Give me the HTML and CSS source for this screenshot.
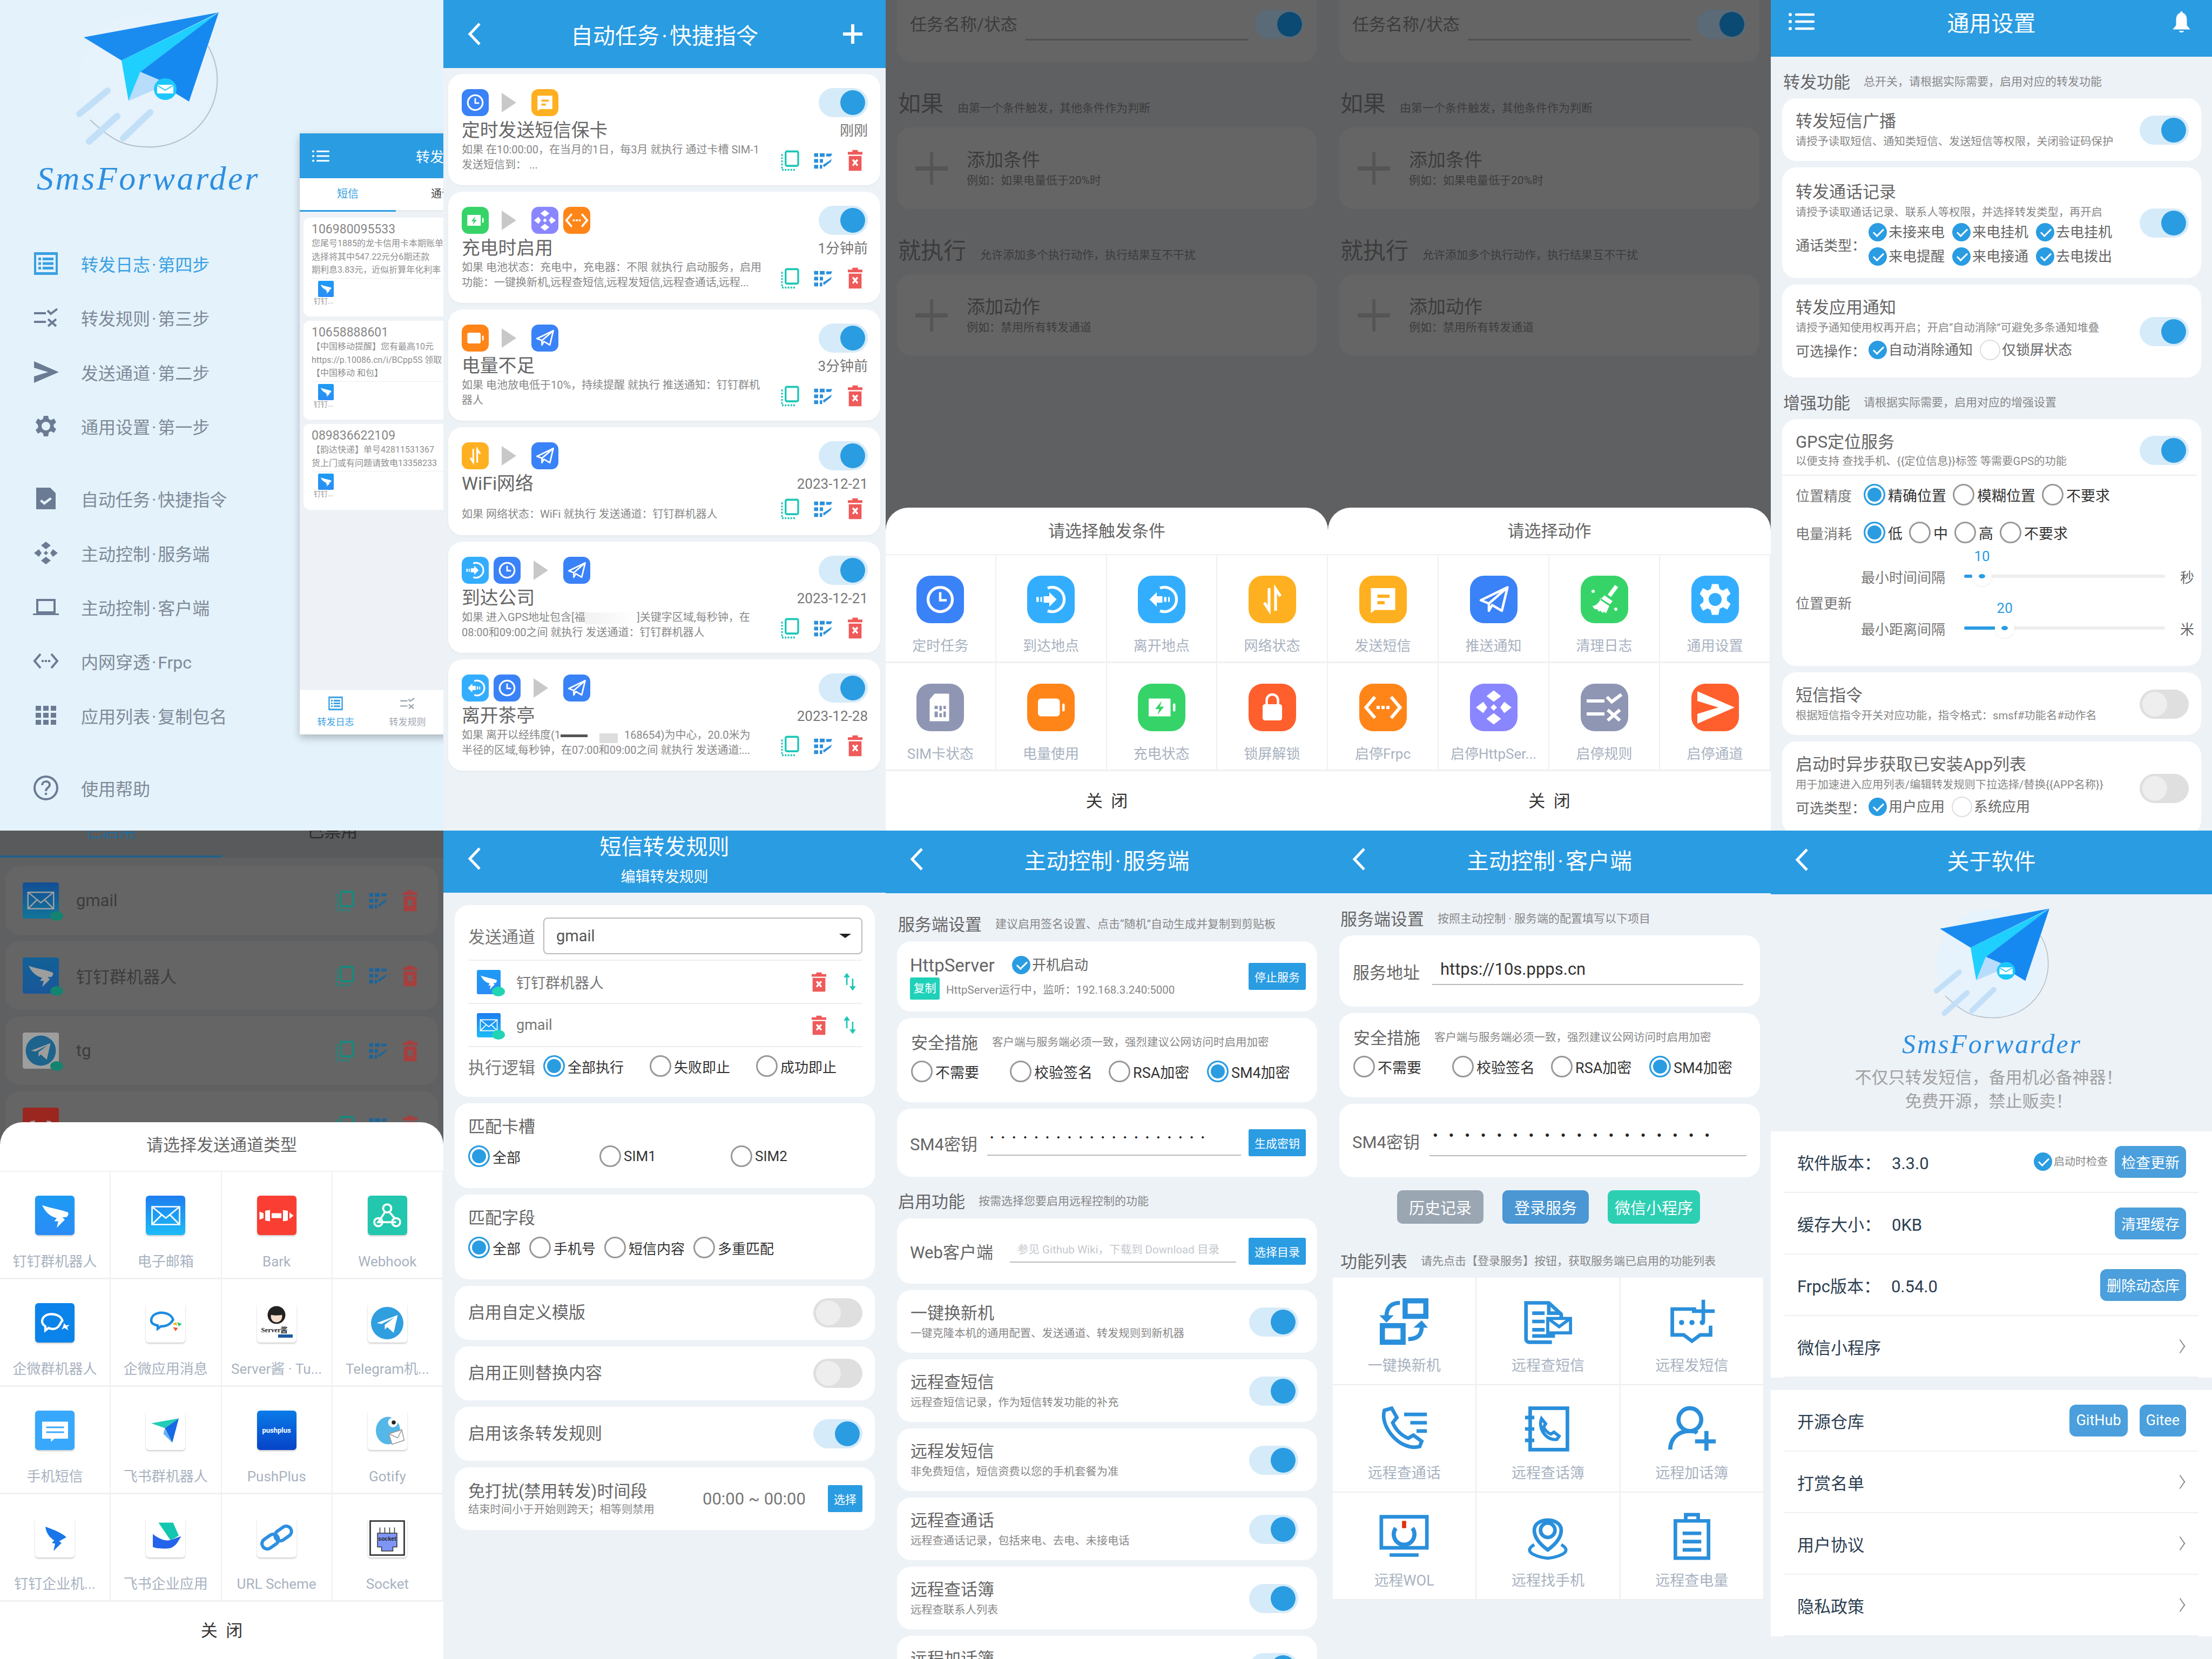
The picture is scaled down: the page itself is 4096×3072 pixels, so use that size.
FILE: index.html
```html
<!DOCTYPE html>
<html lang="zh-CN">

<head>
    <meta charset="UTF-8">
    <title>SmsForwarder</title>
    <link rel="stylesheet" href="styles.css">
</head>

<body>
    <!-- icon sprite -->
    <svg class="sprite" aria-hidden="true">
        <defs>
            <symbol id="list" viewBox="0 0 48 48"><path fill-rule="evenodd" d="M2 3h44v42H2zM6 8v32h36V8z"/><path d="M10 13h5v5h-5zM18 13h20v5H18zM10 21.500h5v5h-5zM18 21.500h20v5H18zM10 30h5v5h-5zM18 30h20v5H18z"/></symbol>
            <symbol id="rules" viewBox="0 0 48 48"><path d="M2 14h22v4H2zM2 30h22v4H2z"/><path fill="none" stroke="currentColor" stroke-width="4" d="M27 11l6 6 12-9M28 27l15 13M43 27 28 40"/></symbol>
            <symbol id="send" viewBox="0 0 48 48"><path d="M2 4l46 20L2 44V32l26-8L2 16z"/></symbol>
            <symbol id="gear" viewBox="0 0 48 48"><path fill-rule="evenodd" d="M20 5h8l1.500 6 4 2 5.500-3 4 7-4.500 4v4.500l4.500 4-4 7-5.500-3-4 2L28 43h-8l-1.500-6-4-2-5.500 3-4-7 4.500-4V22.500L5 17l4-7 5.500 3 4-2zM24 16a8 8 0 1 0 0 16 8 8 0 0 0 0-16z"/></symbol>
            <symbol id="task" viewBox="0 0 48 48"><path fill-rule="evenodd" d="M6 4h26l10 10v30H6zM13 29l3-3 5 4 11-8 3 3-14 11z"/></symbol>
            <symbol id="server" viewBox="0 0 48 48"><path d="M24 3l9 7-9 7-9-7zM24 31l9 7-9 7-9-7zM2 24l9-7 5 7-5 7zM46 24l-9-7-5 7 5 7zM24 20l4 4-4 4-4-4z"/></symbol>
            <symbol id="laptop" viewBox="0 0 48 48"><path fill-rule="evenodd" d="M6 9h36v27H6zM10 13v19h28V13z"/><path d="M0 36h48v3H0z"/></symbol>
            <symbol id="frp" viewBox="0 0 48 48"><path fill="none" stroke="currentColor" stroke-width="4" d="M14 11 3 24l11 13M34 11l11 13-11 13"/><path d="M16 22h4v4h-4zM22 22h4v4h-4zM28 22h4v4h-4z"/></symbol>
            <symbol id="apps" viewBox="0 0 48 48"><path d="M5 6h10v9H5zM19 6h10v9H19zM33 6h10v9H33zM5 19h10v9H5zM19 19h10v9H19zM33 19h10v9H33zM5 32h10v9H5zM19 32h10v9H19zM33 32h10v9H33z"/></symbol>
            <symbol id="help" viewBox="0 0 48 48"><circle cx="24" cy="24" r="21" fill="none" stroke="currentColor" stroke-width="4"/><path fill="none" stroke="currentColor" stroke-width="4" d="M17 19c0-9 14-9 14-1 0 6-7 5-7 12"/><path d="M22 33h4v4h-4z"/></symbol>
            <symbol id="clock" viewBox="0 0 48 48"><circle cx="24" cy="24" r="15" fill="none" stroke="currentColor" stroke-width="3.500"/><path fill="none" stroke="currentColor" stroke-width="3" d="M24 15v10h8"/></symbol>
            <symbol id="arrive" viewBox="0 0 48 48"><path fill="none" stroke="currentColor" stroke-width="3.500" d="M20 10a15 15 0 1 1 0 28"/><path d="M6 21h3v6H6zM11 21h2v6h-2zM15 20h7v-5l9 9-9 9v-5h-7z"/></symbol>
            <symbol id="leave" viewBox="0 0 48 48"><path fill="none" stroke="currentColor" stroke-width="3.500" d="M22 10a15 15 0 1 1 0 28"/><path d="M9 24l9-9v5h7v8h-7v5zM27 21h3v6h-3zM32 21h2v6h-2z"/></symbol>
            <symbol id="net" viewBox="0 0 48 48"><path fill="none" stroke="currentColor" stroke-width="3.500" d="M20 10v27l-6-9M28 38V11l6 9"/></symbol>
            <symbol id="msg" viewBox="0 0 48 48"><path fill-rule="evenodd" d="M9 10h30v27H14l-5 4zM17 18v4h15v-4zM17 26v4h9v-4z"/></symbol>
            <symbol id="plane" viewBox="0 0 48 48"><path fill="none" stroke="currentColor" stroke-width="3" stroke-linejoin="round" d="M8 25 41 9l-7 29-12-7-4 7v-9zM18 29 41 9"/></symbol>
            <symbol id="broom" viewBox="0 0 48 48"><path d="M37 6l4 3-9 12-4-3zM24 19l10 7-3 4-11-7zM18 24l12 8-4 9-3-2-1 2-3-3-2 1-2-3-3 0-3-4c4 0 8-3 11-10z"/><circle cx="10" cy="14" r="2"/><circle cx="38" cy="36" r="2"/></symbol>
            <symbol id="sim" viewBox="0 0 48 48"><path fill-rule="evenodd" d="M17 7h18v34H11V14zM17 22v4h4v-4zM23 22v6h3v-6zM28 22v4h3v-4zM17 29v7h4v-7zM23 31v5h3v-5zM28 29v7h3v-7z"/></symbol>
            <symbol id="batt" viewBox="0 0 48 48"><rect x="8" y="13" width="27" height="22" rx="4"/><rect x="38" y="19" width="3" height="10" rx="1.500"/></symbol>
            <symbol id="charge" viewBox="0 0 48 48"><path fill-rule="evenodd" d="M8 13h27v22H8zM24 16l-8 10h5l-2 7 8-10h-5z"/><rect x="38" y="19" width="3" height="10" rx="1.500"/></symbol>
            <symbol id="lock" viewBox="0 0 48 48"><path fill="none" stroke="currentColor" stroke-width="3" d="M17 21v-6a7 7 0 0 1 14 0v6"/><rect x="12" y="20" width="24" height="20" rx="3"/></symbol>
            <symbol id="copy" viewBox="0 0 48 48" preserveAspectRatio="none"><rect x="13" y="4" width="31" height="32" rx="3" fill="none" stroke="currentColor" stroke-width="4.500"/><path fill="none" stroke="currentColor" stroke-width="4" stroke-dasharray="4 3" d="M4 10v35h34"/></symbol>
            <symbol id="edit" viewBox="0 0 48 48" preserveAspectRatio="none"><path d="M2 6h10v9H2zM16 6h12v9H16zM2 20h10v9H2zM16 20h8v9h-8zM2 34h10v9H2zM16 34h6v9h-6zM32 7h15l-4 7H32zM24 34l22-14-3 7-17 13z"/></symbol>
            <symbol id="trash" viewBox="0 0 48 48" preserveAspectRatio="none"><path d="M15 1h18v4h15v6H0V5h15z"/><path fill-rule="evenodd" d="M3 14h42v33H3zM14 24l4-3 6 4 6-4 4 3-6 5 6 5-4 3-6-5-6 5-4-3 6-5z"/></symbol>
            <symbol id="swap" viewBox="0 0 48 48" preserveAspectRatio="none"><path fill="none" stroke="currentColor" stroke-width="5" d="M13 32V8M33 16v28"/><path d="M13 2l11 11H2zM33 46l11-11H22z"/></symbol>
            <symbol id="back" viewBox="0 0 24 44"><path fill="none" stroke="currentColor" stroke-width="5" d="M22 3 4 22l18 19"/></symbol>
            <symbol id="menu" viewBox="0 0 48 36"><path fill="none" stroke="currentColor" stroke-width="4.500" stroke-linecap="round" d="M14 5h32M14 18h32M14 31h32"/><circle cx="3" cy="5" r="3"/><circle cx="3" cy="18" r="3"/><circle cx="3" cy="31" r="3"/></symbol>
            <symbol id="bell" viewBox="0 0 48 48" preserveAspectRatio="none"><path d="M24 3c2 0 3 1 3 3 8 2 10 8 10 15v9l8 8H3l8-8v-9c0-7 2-13 10-15 0-2 1-3 3-3zM18 41h12c-1 4-11 4-12 0z"/></symbol>

            <symbol id="ding" viewBox="0 0 48 48"><path d="M8 11c10 4 22 5 32 9 1 2 0 4-2 6h-5l3 3-10 10 2-8h-5l3-4C18 25 12 20 8 11z"/></symbol>
            <symbol id="mail" viewBox="0 0 48 48"><path fill="none" stroke="currentColor" stroke-width="1.800" d="M7 13h34v22H7zM7 13l17 14 17-14M7 35l12-12M41 35 29 23"/></symbol>
            <symbol id="bark" viewBox="0 0 48 48"><path d="M3 19l5 2v6l-5 2zM10 18l6-1v14l-6-1zM18 21h12v6H18zM32 17l6 1v12l-6 1zM40 20l5 4-5 4z"/></symbol>
            <symbol id="hook" viewBox="0 0 48 48"><g fill="none" stroke="currentColor" stroke-width="2.500"><circle cx="24" cy="15" r="5"/><circle cx="13" cy="32" r="5"/><circle cx="35" cy="32" r="5"/><path d="M21 20l-8 12h22M27 20l7 8"/></g></symbol>
            <symbol id="wework" viewBox="0 0 48 48"><path fill="none" stroke="currentColor" stroke-width="2.800" d="M8 22c0-12 22-12 25-1-2 1-2 4-4 6-3 5-9 5-13 3l-4 3v-5c-3-2-4-4-4-6z"/><path d="M35 24l3 3 4-1-3 3 1 4-4-3-4 2 2-4z"/></symbol>
            <symbol id="tg" viewBox="0 0 48 48"><circle cx="24" cy="24" r="20" fill="#2f9fe0"/><path fill="#fff" d="M11 24l26-10-5 22-8-7-3 3v-6l12-9-16 8z"/></symbol>
            <symbol id="sms" viewBox="0 0 48 48"><path fill-rule="evenodd" d="M8 13h32v21H23l-4 4v-4H8zM13 19v2h22v-2zM13 25v2h22v-2z"/></symbol>
            <symbol id="wechat" viewBox="0 0 48 48"><path fill="none" stroke="#1d8ce0" stroke-width="3" d="M6 21c0-13 24-13 27-1-3 5-7 8-15 8l-4 3v-4c-5-1-8-3-8-6z"/><path fill="#f7b500" d="M32 25l5-2 1 4z"/><path fill="#28c47a" d="M38 23l6 2-4 3z"/><path fill="#f0562c" d="M33 29l6 1-3 4z"/></symbol>
            <symbol id="feishu" viewBox="0 0 48 48"><path fill="#22cdb4" d="M6 15l34-6-17 12z"/><path fill="#1769e6" d="M40 9l-8 30-9-18z"/><path fill="#66b1f5" d="M23 21l9 18-11-11z"/></symbol>
            <symbol id="gotify" viewBox="0 0 48 48"><ellipse cx="25" cy="24" rx="15" ry="17" fill="#55b6e8"/><circle cx="31" cy="14" r="6" fill="#fff"/><circle cx="32" cy="14" r="2.500" fill="#222"/><path fill="#fff" stroke="#999" d="M26 28l16-5 3 13-15 5z"/><path fill="none" stroke="#999" d="M26 28l11 5 5-10"/></symbol>
            <symbol id="dingent" viewBox="0 0 48 48"><path fill="#1a76e8" d="M12 10c8 3 18 6 26 13l-9 5 3 2-10 10 2-9-4-1 3-3c-6-4-10-9-11-17z"/></symbol>
            <symbol id="fsapp" viewBox="0 0 48 48"><path fill="#13c6b0" d="M15 5h18l7 16-10 6z"/><path fill="#2563eb" d="M8 19c6 5 13 8 18 8 6 0 11-4 17-5-4 6-7 15-18 15-6 0-13 0-17-2z"/></symbol>
            <symbol id="link" viewBox="0 0 48 48"><g fill="none" stroke="#2f8fe0" stroke-width="4"><rect x="5" y="22" width="22" height="13" rx="6.500" transform="rotate(-35 16 28)"/><rect x="21" y="12" width="22" height="13" rx="6.500" transform="rotate(-35 32 18)"/></g></symbol>

            <symbol id="r-new" viewBox="0 0 48 48"><g fill="none" stroke="currentColor" stroke-width="5"><path d="M25 4h20v15H25zM3 28h20v16H3z"/></g><path fill="none" stroke="currentColor" stroke-width="4" d="M20 6C12 6 7 10 7 19M28 41c8 0 13-3 13-12"/><path d="M0 18h14l-7 7zM33 30h14l-6-7z"/></symbol>
            <symbol id="r-doc" viewBox="0 0 48 48"><path fill="none" stroke="currentColor" stroke-width="3.500" d="M28 44H6a3 3 0 0 1-3-3V6h22l12 11v3M25 5v11h11M9 16h12M9 24h12M9 32h12M9 38h22"/><path fill="none" stroke="currentColor" stroke-width="3" d="M24 21h22v14H24zM24 21l11 8 11-8"/></symbol>
            <symbol id="r-add" viewBox="0 0 48 48"><path fill="none" stroke="currentColor" stroke-width="3.500" d="M28 12H5v25h11l8 6 8-6h10V28M35 3v22M24 14h22"/><circle cx="14" cy="25" r="2.500"/><circle cx="24" cy="25" r="2.500"/><circle cx="34" cy="25" r="2.500"/></symbol>
            <symbol id="r-call" viewBox="0 0 48 48"><path fill="none" stroke="currentColor" stroke-width="3.500" d="M12 4l5 9-4 5c3 7 8 12 15 15l5-3 8 6-2 5c-19 5-39-20-34-35zM24 10h22M30 18h16M36 26h10"/></symbol>
            <symbol id="r-book" viewBox="0 0 48 48"><path fill="none" stroke="currentColor" stroke-width="3.500" d="M7 4h36v40H7zM2 13h9M2 24h9M2 35h9"/><path fill="none" stroke="currentColor" stroke-width="3" d="M18 14l4 5-2 3c1 3 4 6 7 7l3-2 5 4-2 3c-9 2-19-9-15-20z"/></symbol>
            <symbol id="r-person" viewBox="0 0 48 48"><circle cx="22" cy="15" r="11" fill="none" stroke="currentColor" stroke-width="4"/><path fill="none" stroke="currentColor" stroke-width="4" d="M3 44c0-10 7-18 19-18 3 0 5 0 7 2M38 26v19M27 36h20"/></symbol>
            <symbol id="r-wol" viewBox="0 0 48 48"><path fill="none" stroke="currentColor" stroke-width="3.500" d="M2 5h44v30H2zM10 42h28"/><path fill="none" stroke="currentColor" stroke-width="4" d="M16 16a10 10 0 1 0 16 0"/><rect x="22" y="9" width="4" height="7" fill="#e03010"/></symbol>
            <symbol id="r-loc" viewBox="0 0 48 48"><path fill="none" stroke="currentColor" stroke-width="3.500" d="M24 37c-7-5-13-11-13-19C11 5 37 5 37 18c0 8-6 14-13 19z"/><circle cx="24" cy="18" r="7" fill="none" stroke="currentColor" stroke-width="3.500"/><path fill="none" stroke="currentColor" stroke-width="3" d="M11 32c-14 8 8 13 13 13s27-5 13-13"/></symbol>
            <symbol id="r-clip" viewBox="0 0 48 48"><path fill="none" stroke="currentColor" stroke-width="3.500" d="M8 9h32v36H8zM18 3h12v6H18zM15 21h18M15 29h18M15 37h18"/></symbol>

            <symbol id="logo" viewBox="140 15 270 265">
                <circle cx="272" cy="148" r="124" fill="#e6f2fc"/>
                <path fill="none" stroke="#b4c0ca" stroke-width="2" d="M385 85a124 124 0 0 1-113 187c-40 0-65-12-105-50"/>
                <path fill="none" stroke="#c2dff8" stroke-width="12" stroke-linecap="round" d="M147 211 199 168M165 262l52-47M228 256l50-48"/>
                <path fill="#1a8cf0" d="M155 69 405 23 225 112z"/>
                <path fill="#1fd0ff" d="M225 112 405 24 260 133 238 187z"/>
                <path fill="#1589f0" d="M260 133 405 23 350 188z"/>
                <path fill="#b8dcfb" d="M238 187 260 133 312 155z"/>
                <ellipse cx="306" cy="165" rx="21" ry="20" fill="#1cc8fb"/>
                <path fill="#fff" d="M291 157h30v16h-30z"/>
                <path fill="none" stroke="#1cc8fb" stroke-width="2" d="M291 158l15 9 15-9"/>
            </symbol>
        </defs>
    </svg>

    <!-- 1: drawer -->
    <section class="panel drawer">
        <svg class="logo"><use href="#logo"/></svg>
        <div class="brand">SmsForwarder</div>
        <nav class="nav">
            <a class="nav-i active"><svg><use href="#list"/></svg>转发日志 · 第四步</a>
            <a class="nav-i"><svg><use href="#rules"/></svg>转发规则 · 第三步</a>
            <a class="nav-i"><svg><use href="#send"/></svg>发送通道 · 第二步</a>
            <a class="nav-i"><svg><use href="#gear"/></svg>通用设置 · 第一步</a>
            <a class="nav-i gap"><svg><use href="#task"/></svg>自动任务 · 快捷指令</a>
            <a class="nav-i"><svg><use href="#server"/></svg>主动控制 · 服务端</a>
            <a class="nav-i"><svg><use href="#laptop"/></svg>主动控制 · 客户端</a>
            <a class="nav-i"><svg><use href="#frp"/></svg>内网穿透 · Frpc</a>
            <a class="nav-i"><svg><use href="#apps"/></svg>应用列表 · 复制包名</a>
            <a class="nav-i gap"><svg><use href="#help"/></svg>使用帮助</a>
        </nav>
        <div class="phone">
            <div class="phone-bar"><svg class="phone-menu"><use href="#menu"/></svg><span>转发日志</span></div>
            <div class="phone-tabs"><b>短信</b><span>通话</span></div>
            <div class="phone-list">
                <div class="log h183">
                    <div class="log-no">106980095533</div>
                    <p>您尾号1885的龙卡信用卡本期账单<br>选择将其中547.22元分6期还款<br>期利息3.83元，近似折算年化利率</p>
                    <div class="log-foot"><span class="mini t-ding"><svg><use href="#ding"/></svg></span><i>钉钉...</i></div>
                </div>
                <div class="log h183">
                    <div class="log-no">10658888601</div>
                    <p>【中国移动提醒】您有最高10元<br>https://p.10086.cn/i/BCpp5S 领取<br>【中国移动 和包】</p>
                    <div class="log-foot"><span class="mini t-ding"><svg><use href="#ding"/></svg></span><i>钉钉...</i></div>
                </div>
                <div class="log h159">
                    <div class="log-no">089836622109</div>
                    <p>【韵达快递】单号42811531367<br>货上门或有问题请致电13358233</p>
                    <div class="log-foot"><span class="mini t-ding"><svg><use href="#ding"/></svg></span><i>钉钉...</i></div>
                </div>
            </div>
            <div class="phone-nav">
                <div class="active"><svg><use href="#list"/></svg>转发日志</div>
                <div><svg><use href="#rules"/></svg>转发规则</div>
            </div>
        </div>
    </section>

    <!-- 2: tasks -->
    <section class="panel">
        <header class="bar bar-126"><svg class="bar-back"><use href="#back"/></svg>自动任务 · 快捷指令<svg class="bar-plus" viewBox="0 0 40 40"><path d="M20 2v36M2 20h36"/></svg></header>
        <div class="tasks">
            <article class="task">
                <div class="task-l">
                    <div class="tiles"><span class="tile t-blue"><svg><use href="#clock"/></svg></span><i class="play"></i><span class="tile t-yel"><svg><use href="#msg"/></svg></span></div>
                    <h3>定时发送短信保卡</h3>
                    <p>如果 在10:00:00，在当月的1日，每3月 就执行 通过卡槽 SIM-1<br>发送短信到： ...</p>
                </div>
                <div class="task-r"><span class="sw"></span><time>刚刚</time><div class="acts"><svg class="a-copy"><use href="#copy"/></svg><svg class="a-edit"><use href="#edit"/></svg><svg class="a-del"><use href="#trash"/></svg></div></div>
            </article>
            <article class="task">
                <div class="task-l">
                    <div class="tiles"><span class="tile t-green"><svg><use href="#charge"/></svg></span><i class="play"></i><span class="tile t-pur"><svg><use href="#server"/></svg></span><span class="tile t-org"><svg><use href="#frp"/></svg></span></div>
                    <h3>充电时启用</h3>
                    <p>如果 电池状态：充电中，充电器：不限 就执行 启动服务，启用<br>功能：一键换新机,远程查短信,远程发短信,远程查通话,远程...</p>
                </div>
                <div class="task-r"><span class="sw"></span><time>1分钟前</time><div class="acts"><svg class="a-copy"><use href="#copy"/></svg><svg class="a-edit"><use href="#edit"/></svg><svg class="a-del"><use href="#trash"/></svg></div></div>
            </article>
            <article class="task">
                <div class="task-l">
                    <div class="tiles"><span class="tile t-org"><svg><use href="#batt"/></svg></span><i class="play"></i><span class="tile t-blue"><svg><use href="#plane"/></svg></span></div>
                    <h3>电量不足</h3>
                    <p>如果 电池放电低于10%，持续提醒 就执行 推送通知：钉钉群机<br>器人</p>
                </div>
                <div class="task-r"><span class="sw"></span><time>3分钟前</time><div class="acts"><svg class="a-copy"><use href="#copy"/></svg><svg class="a-edit"><use href="#edit"/></svg><svg class="a-del"><use href="#trash"/></svg></div></div>
            </article>
            <article class="task task-low">
                <div class="task-l">
                    <div class="tiles"><span class="tile t-yel"><svg><use href="#net"/></svg></span><i class="play"></i><span class="tile t-blue"><svg><use href="#plane"/></svg></span></div>
                    <h3>WiFi网络</h3>
                    <p>如果 网络状态：WiFi 就执行 发送通道：钉钉群机器人</p>
                </div>
                <div class="task-r"><span class="sw"></span><time>2023-12-21</time><div class="acts"><svg class="a-copy"><use href="#copy"/></svg><svg class="a-edit"><use href="#edit"/></svg><svg class="a-del"><use href="#trash"/></svg></div></div>
            </article>
            <article class="task">
                <div class="task-l">
                    <div class="tiles"><span class="tile t-sky"><svg><use href="#arrive"/></svg></span><span class="tile t-blue"><svg><use href="#clock"/></svg></span><i class="play"></i><span class="tile t-blue"><svg><use href="#plane"/></svg></span></div>
                    <h3>到达公司</h3>
                    <p>如果 进入GPS地址包含[福<span class="blur"></span>]关键字区域,每秒钟，在<br>08:00和09:00之间 就执行 发送通道：钉钉群机器人</p>
                </div>
                <div class="task-r"><span class="sw"></span><time>2023-12-21</time><div class="acts"><svg class="a-copy"><use href="#copy"/></svg><svg class="a-edit"><use href="#edit"/></svg><svg class="a-del"><use href="#trash"/></svg></div></div>
            </article>
            <article class="task">
                <div class="task-l">
                    <div class="tiles"><span class="tile t-sky"><svg><use href="#leave"/></svg></span><span class="tile t-blue"><svg><use href="#clock"/></svg></span><i class="play"></i><span class="tile t-blue"><svg><use href="#plane"/></svg></span></div>
                    <h3>离开茶亭</h3>
                    <p>如果 离开以经纬度(1<span class="blur-dark"></span><span class="blur-gray"></span>168654)为中心，20.0米为<br>半径的区域,每秒钟，在07:00和09:00之间 就执行 发送通道:...</p>
                </div>
                <div class="task-r"><span class="sw"></span><time>2023-12-28</time><div class="acts"><svg class="a-copy"><use href="#copy"/></svg><svg class="a-edit"><use href="#edit"/></svg><svg class="a-del"><use href="#trash"/></svg></div></div>
            </article>
        </div>
    </section>

    <!-- 3: trigger picker -->
    <section class="panel dim">
        <div class="dim-top"><span class="dim-name">任务名称/状态</span><span class="dim-input"></span><span class="sw sw-dim"></span></div>
        <div class="dim-sec"><h2>如果</h2><span>由第一个条件触发，其他条件作为判断</span></div>
        <div class="dim-add"><svg class="dim-plus" viewBox="0 0 60 60"><path d="M27 0h6v60h-6z"/><path d="M0 26h60v8H0z"/></svg><div><h3>添加条件</h3><p>例如：如果电量低于20%时</p></div></div>
        <div class="dim-sec"><h2>就执行</h2><span>允许添加多个执行动作，执行结果互不干扰</span></div>
        <div class="dim-add"><svg class="dim-plus" viewBox="0 0 60 60"><path d="M27 0h6v60h-6z"/><path d="M0 26h60v8H0z"/></svg><div><h3>添加动作</h3><p>例如：禁用所有转发通道</p></div></div>
        <div class="sheet sheet-940">
            <div class="sheet-title">请选择触发条件</div>
            <div class="pick4">
                <div class="cell"><span class="tile big t-blue"><svg><use href="#clock"/></svg></span><label>定时任务</label></div>
                <div class="cell"><span class="tile big t-sky"><svg><use href="#arrive"/></svg></span><label>到达地点</label></div>
                <div class="cell"><span class="tile big t-sky"><svg><use href="#leave"/></svg></span><label>离开地点</label></div>
                <div class="cell"><span class="tile big t-yel"><svg><use href="#net"/></svg></span><label>网络状态</label></div>
                <div class="cell"><span class="tile big t-gray"><svg><use href="#sim"/></svg></span><label>SIM卡状态</label></div>
                <div class="cell"><span class="tile big t-org"><svg><use href="#batt"/></svg></span><label>电量使用</label></div>
                <div class="cell"><span class="tile big t-green"><svg><use href="#charge"/></svg></span><label>充电状态</label></div>
                <div class="cell"><span class="tile big t-red"><svg><use href="#lock"/></svg></span><label>锁屏解锁</label></div>
            </div>
            <div class="sheet-close">关 闭</div>
        </div>
    </section>

    <!-- 4: action picker -->
    <section class="panel dim">
        <div class="dim-top"><span class="dim-name">任务名称/状态</span><span class="dim-input"></span><span class="sw sw-dim"></span></div>
        <div class="dim-sec"><h2>如果</h2><span>由第一个条件触发，其他条件作为判断</span></div>
        <div class="dim-add"><svg class="dim-plus" viewBox="0 0 60 60"><path d="M27 0h6v60h-6z"/><path d="M0 26h60v8H0z"/></svg><div><h3>添加条件</h3><p>例如：如果电量低于20%时</p></div></div>
        <div class="dim-sec"><h2>就执行</h2><span>允许添加多个执行动作，执行结果互不干扰</span></div>
        <div class="dim-add"><svg class="dim-plus" viewBox="0 0 60 60"><path d="M27 0h6v60h-6z"/><path d="M0 26h60v8H0z"/></svg><div><h3>添加动作</h3><p>例如：禁用所有转发通道</p></div></div>
        <div class="sheet sheet-940">
            <div class="sheet-title">请选择动作</div>
            <div class="pick4">
                <div class="cell"><span class="tile big t-yel"><svg><use href="#msg"/></svg></span><label>发送短信</label></div>
                <div class="cell"><span class="tile big t-blue"><svg><use href="#plane"/></svg></span><label>推送通知</label></div>
                <div class="cell"><span class="tile big t-green"><svg><use href="#broom"/></svg></span><label>清理日志</label></div>
                <div class="cell"><span class="tile big t-sky"><svg><use href="#gear"/></svg></span><label>通用设置</label></div>
                <div class="cell"><span class="tile big t-org"><svg><use href="#frp"/></svg></span><label>启停Frpc</label></div>
                <div class="cell"><span class="tile big t-pur"><svg><use href="#server"/></svg></span><label>启停HttpSer...</label></div>
                <div class="cell"><span class="tile big t-gray"><svg><use href="#rules"/></svg></span><label>启停规则</label></div>
                <div class="cell"><span class="tile big t-red"><svg><use href="#send"/></svg></span><label>启停通道</label></div>
            </div>
            <div class="sheet-close">关 闭</div>
        </div>
    </section>

    <!-- 5: settings -->
    <section class="panel">
        <header class="bar bar-105"><svg class="bar-menu"><use href="#menu"/></svg>通用设置<svg class="bar-bell"><use href="#bell"/></svg></header>
        <div class="sec sec-first"><h2>转发功能</h2><span>总开关，请根据实际需要，启用对应的转发功能</span></div>
        <div class="card opt">
            <div><h3>转发短信广播</h3><p>请授予读取短信、通知类短信、发送短信等权限，关闭验证码保护</p></div>
            <span class="sw"></span>
        </div>
        <div class="card opt h205">
            <div>
                <h3>转发通话记录</h3><p>请授予读取通话记录、联系人等权限，并选择转发类型，再开启</p>
                <div class="calls"><b>通话类型：</b>
                    <div class="checks">
                        <span class="chk on">未接来电</span><span class="chk on">来电挂机</span><span class="chk on">去电挂机</span>
                        <span class="chk on">来电提醒</span><span class="chk on">来电接通</span><span class="chk on">去电拨出</span>
                    </div>
                </div>
            </div>
            <span class="sw"></span>
        </div>
        <div class="card opt h172">
            <div>
                <h3>转发应用通知</h3><p>请授予通知使用权再开启；开启“自动消除”可避免多条通知堆叠</p>
                <div class="line"><b>可选操作：</b><span class="chk on">自动消除通知</span><span class="chk">仅锁屏状态</span></div>
            </div>
            <span class="sw"></span>
        </div>
        <div class="sec"><h2>增强功能</h2><span>请根据实际需要，启用对应的增强设置</span></div>
        <div class="card gps">
            <div class="opt opt-rule">
                <div><h3>GPS定位服务</h3><p>以便支持 查找手机、{{定位信息}}标签 等需要GPS的功能</p></div>
                <span class="sw"></span>
            </div>
            <div class="gps-row"><b>位置精度</b><span class="radio on">精确位置</span><span class="radio">模糊位置</span><span class="radio">不要求</span></div>
            <div class="gps-row"><b>电量消耗</b><span class="radio on">低</span><span class="radio">中</span><span class="radio">高</span><span class="radio">不要求</span></div>
            <div class="loc">
                <b>位置更新</b>
                <div class="sliders">
                    <div class="sl"><span>最小时间间隔</span><div class="track"><div class="fill" style="width:4%"></div><div class="thumb" style="left:8.9%"><em>10</em></div></div><i>秒</i></div>
                    <div class="sl"><span>最小距离间隔</span><div class="track"><div class="fill" style="width:15.6%"></div><div class="thumb" style="left:20.2%"><em>20</em></div></div><i>米</i></div>
                </div>
            </div>
        </div>
        <div class="card opt">
            <div><h3>短信指令</h3><p>根据短信指令开关对应功能，指令格式：smsf#功能名#动作名</p></div>
            <span class="sw off"></span>
        </div>
        <div class="card opt h172">
            <div>
                <h3>启动时异步获取已安装App列表</h3><p>用于加速进入应用列表/编辑转发规则下拉选择/替换{{APP名称}}</p>
                <div class="line"><b>可选类型：</b><span class="chk on">用户应用</span><span class="chk">系统应用</span></div>
            </div>
            <span class="sw off"></span>
        </div>
    </section>

    <!-- 6: channel picker -->
    <section class="panel dim">
        <div class="dim-tabs"><span class="cur">已启用</span><span>已禁用</span></div>
        <div class="chan"><span class="thumb-ic t-mail"><svg><use href="#mail"/></svg><i></i></span>gmail<div class="acts"><svg class="a-copy"><use href="#copy"/></svg><svg class="a-edit"><use href="#edit"/></svg><svg class="a-del"><use href="#trash"/></svg></div></div>
        <div class="chan"><span class="thumb-ic t-ding"><svg><use href="#ding"/></svg><i></i></span>钉钉群机器人<div class="acts"><svg class="a-copy"><use href="#copy"/></svg><svg class="a-edit"><use href="#edit"/></svg><svg class="a-del"><use href="#trash"/></svg></div></div>
        <div class="chan"><span class="thumb-ic t-white"><svg><use href="#tg"/></svg><i></i></span>tg<div class="acts"><svg class="a-copy"><use href="#copy"/></svg><svg class="a-edit"><use href="#edit"/></svg><svg class="a-del"><use href="#trash"/></svg></div></div>
        <div class="chan"><span class="thumb-ic t-bark"><svg><use href="#bark"/></svg><i></i></span><div class="acts"><svg class="a-copy"><use href="#copy"/></svg><svg class="a-edit"><use href="#edit"/></svg><svg class="a-del"><use href="#trash"/></svg></div></div>
        <div class="sheet sheet-540">
            <div class="sheet-title short">请选择发送通道类型</div>
            <div class="pick4 small">
                <div class="cell"><span class="sq t-ding"><svg><use href="#ding"/></svg></span><label>钉钉群机器人</label></div>
                <div class="cell"><span class="sq t-mail"><svg><use href="#mail"/></svg></span><label>电子邮箱</label></div>
                <div class="cell"><span class="sq t-bark"><svg><use href="#bark"/></svg></span><label>Bark</label></div>
                <div class="cell"><span class="sq t-hook"><svg><use href="#hook"/></svg></span><label>Webhook</label></div>
                <div class="cell"><span class="sq t-wework"><svg><use href="#wework"/></svg></span><label>企微群机器人</label></div>
                <div class="cell"><span class="sq t-white"><svg><use href="#wechat"/></svg></span><label>企微应用消息</label></div>
                <div class="cell"><span class="sq t-white"><svg viewBox="0 0 48 48"><circle cx="24" cy="14" r="11" fill="#222"/><circle cx="24" cy="16" r="7" fill="#f6dccb"/><path fill="#222" d="M15 13c5 2 13 2 18 0l-3-6H18z"/><rect x="26" y="38" width="18" height="4" fill="#1d5a9e"/><text x="5" y="35" class="chan-text">Server酱</text></svg></span><label>Server酱 · Tu...</label></div>
                <div class="cell"><span class="sq t-white"><svg><use href="#tg"/></svg></span><label>Telegram机...</label></div>
                <div class="cell"><span class="sq t-sms"><svg><use href="#sms"/></svg></span><label>手机短信</label></div>
                <div class="cell"><span class="sq t-white"><svg><use href="#feishu"/></svg></span><label>飞书群机器人</label></div>
                <div class="cell"><span class="sq t-push">pushplus</span><label>PushPlus</label></div>
                <div class="cell"><span class="sq t-white"><svg><use href="#gotify"/></svg></span><label>Gotify</label></div>
                <div class="cell"><span class="sq t-white"><svg><use href="#dingent"/></svg></span><label>钉钉企业机...</label></div>
                <div class="cell"><span class="sq t-white"><svg><use href="#fsapp"/></svg></span><label>飞书企业应用</label></div>
                <div class="cell"><span class="sq t-white"><svg><use href="#link"/></svg></span><label>URL Scheme</label></div>
                <div class="cell"><span class="sq t-white"><svg viewBox="0 0 48 48"><rect x="3" y="3" width="42" height="42" fill="#fff" stroke="#333" stroke-width="1.800"/><path fill="#7f95f5" stroke="#333" d="M12 18h24v17h-5v5H17v-5h-5z"/><path fill="none" stroke="#333" d="M15 11v7M21 11v7M27 11v7M33 11v7"/><text x="24" y="27" class="sock-text">socket</text></svg></span><label>Socket</label></div>
            </div>
            <div class="sheet-close">关 闭</div>
        </div>
    </section>

    <!-- 7: rule edit -->
    <section class="panel">
        <header class="bar bar-two"><svg class="bar-back up"><use href="#back"/></svg><div class="two-t">短信转发规则</div><div class="two-s">编辑转发规则</div></header>
        <div class="card wide c7-first">
            <div class="sel-row"><b>发送通道</b><div class="sel">gmail<i></i></div></div>
            <div class="ch-row"><span class="mini-ch t-ding"><svg><use href="#ding"/></svg><i></i></span><span>钉钉群机器人</span><svg class="a-del"><use href="#trash"/></svg><svg class="a-swap"><use href="#swap"/></svg></div>
            <div class="ch-row"><span class="mini-ch t-mail"><svg><use href="#mail"/></svg><i></i></span><span>gmail</span><svg class="a-del"><use href="#trash"/></svg><svg class="a-swap"><use href="#swap"/></svg></div>
            <div class="logic"><b>执行逻辑</b><span class="radio on r197">全部执行</span><span class="radio r197">失败即止</span><span class="radio">成功即止</span></div>
        </div>
        <div class="card wide match">
            <h3>匹配卡槽</h3>
            <div class="rads"><span class="radio on r243">全部</span><span class="radio r243">SIM1</span><span class="radio">SIM2</span></div>
        </div>
        <div class="card wide match">
            <h3>匹配字段</h3>
            <div class="rads g16"><span class="radio on">全部</span><span class="radio">手机号</span><span class="radio">短信内容</span><span class="radio">多重匹配</span></div>
        </div>
        <div class="card wide flip"><h3>启用自定义模版</h3><span class="sw off"></span></div>
        <div class="card wide flip"><h3>启用正则替换内容</h3><span class="sw off"></span></div>
        <div class="card wide flip"><h3>启用该条转发规则</h3><span class="sw"></span></div>
        <div class="card wide silent">
            <div class="silent-t"><h3>免打扰(禁用转发)时间段</h3><p>结束时间小于开始则跨天；相等则禁用</p></div>
            <span class="clock-range">00:00 ~ 00:00</span><button class="btn">选择</button>
        </div>
    </section>

    <!-- 8: server -->
    <section class="panel">
        <header class="bar bar-116"><svg class="bar-back"><use href="#back"/></svg>主动控制 · 服务端</header>
        <div class="sec s-server"><h2>服务端设置</h2><span>建议启用签名设置、点击“随机”自动生成并复制到剪贴板</span></div>
        <div class="card http">
            <div><div class="http-t"><h4>HttpServer</h4><span class="chk on">开机启动</span></div>
                <div class="http-s"><span class="tag">复制</span><span>HttpServer运行中，监听：192.168.3.240:5000</span></div></div>
            <button class="btn">停止服务</button>
        </div>
        <div class="card safe">
            <div class="safe-t"><h3>安全措施</h3><span>客户端与服务端必须一致，强烈建议公网访问时启用加密</span></div>
            <div class="safe-r"><span class="radio">不需要</span><span class="radio">校验签名</span><span class="radio">RSA加密</span><span class="radio on">SM4加密</span></div>
        </div>
        <div class="card keyr">
            <h3>SM4密钥</h3><div class="key-in">••••••••••••••••••••</div><button class="btn">生成密钥</button>
        </div>
        <div class="sec s-enable"><h2>启用功能</h2><span>按需选择您要启用远程控制的功能</span></div>
        <div class="card keyr web">
            <h3>Web客户端</h3><div class="web-in">参见 Github Wiki，下载到 Download 目录</div><button class="btn">选择目录</button>
        </div>
        <div class="card opt far"><div><h3>一键换新机</h3><p>一键克隆本机的通用配置、发送通道、转发规则到新机器</p></div><span class="sw"></span></div>
        <div class="card opt far"><div><h3>远程查短信</h3><p>远程查短信记录，作为短信转发功能的补充</p></div><span class="sw"></span></div>
        <div class="card opt far"><div><h3>远程发短信</h3><p>非免费短信，短信资费以您的手机套餐为准</p></div><span class="sw"></span></div>
        <div class="card opt far"><div><h3>远程查通话</h3><p>远程查通话记录，包括来电、去电、未接电话</p></div><span class="sw"></span></div>
        <div class="card opt far"><div><h3>远程查话簿</h3><p>远程查联系人列表</p></div><span class="sw"></span></div>
        <div class="card opt far"><div><h3>远程加话簿</h3><p>远程添加联系人</p></div><span class="sw"></span></div>
    </section>

    <!-- 9: client -->
    <section class="panel">
        <header class="bar bar-116"><svg class="bar-back"><use href="#back"/></svg>主动控制 · 客户端</header>
        <div class="sec s-client"><h2>服务端设置</h2><span>按照主动控制 · 服务端的配置填写以下项目</span></div>
        <div class="card addr"><h3>服务地址</h3><div class="addr-in">https://10s.ppps.cn</div></div>
        <div class="card safe">
            <div class="safe-t"><h3>安全措施</h3><span>客户端与服务端必须一致，强烈建议公网访问时启用加密</span></div>
            <div class="safe-r"><span class="radio">不需要</span><span class="radio">校验签名</span><span class="radio">RSA加密</span><span class="radio on">SM4加密</span></div>
        </div>
        <div class="card keyr key-big"><h3>SM4密钥</h3><div class="key-in">••••••••••••••••••</div></div>
        <div class="btns"><button class="pill p-gray">历史记录</button><button class="pill p-blue">登录服务</button><button class="pill p-teal">微信小程序</button></div>
        <div class="sec s-func"><h2>功能列表</h2><span>请先点击【登录服务】按钮，获取服务端已启用的功能列表</span></div>
        <div class="funcs">
            <div class="fn"><svg><use href="#r-new"/></svg><label>一键换新机</label></div>
            <div class="fn"><svg><use href="#r-doc"/></svg><label>远程查短信</label></div>
            <div class="fn"><svg><use href="#r-add"/></svg><label>远程发短信</label></div>
            <div class="fn"><svg><use href="#r-call"/></svg><label>远程查通话</label></div>
            <div class="fn"><svg><use href="#r-book"/></svg><label>远程查话簿</label></div>
            <div class="fn"><svg><use href="#r-person"/></svg><label>远程加话簿</label></div>
            <div class="fn"><svg><use href="#r-wol"/></svg><label>远程WOL</label></div>
            <div class="fn"><svg><use href="#r-loc"/></svg><label>远程找手机</label></div>
            <div class="fn"><svg><use href="#r-clip"/></svg><label>远程查电量</label></div>
        </div>
    </section>

    <!-- 10: about -->
    <section class="panel">
        <header class="bar bar-118"><svg class="bar-back"><use href="#back"/></svg>关于软件</header>
        <svg class="logo logo-sm"><use href="#logo"/></svg>
        <div class="brand brand-sm">SmsForwarder</div>
        <p class="slogan">不仅只转发短信，备用机必备神器！<br>免费开源，禁止贩卖！</p>
        <div class="block block-a">
            <div class="ab"><span>软件版本：<em>3.3.0</em></span><span class="chk on small">启动时检查</span><button class="ab-btn">检查更新</button></div>
            <div class="ab"><span>缓存大小：<em>0KB</em></span><button class="ab-btn">清理缓存</button></div>
            <div class="ab"><span>Frpc版本：<em>0.54.0</em></span><button class="ab-btn">删除动态库</button></div>
            <div class="ab"><span>微信小程序</span><i class="more"></i></div>
        </div>
        <div class="block">
            <div class="ab"><span>开源仓库</span><button class="ab-btn">GitHub</button><button class="ab-btn next">Gitee</button></div>
            <div class="ab"><span>打赏名单</span><i class="more"></i></div>
            <div class="ab"><span>用户协议</span><i class="more"></i></div>
            <div class="ab"><span>隐私政策</span><i class="more"></i></div>
        </div>
    </section>
</body>

</html>
```

FILE: styles.css
```css
* {
    box-sizing: border-box;
}

body {
    margin: 0;
    width: 4096px;
    height: 3072px;
    overflow: hidden;
    display: grid;
    grid-template-columns: 821px 819px 819px 820px 817px;
    grid-template-rows: 1538px 1534px;
    font-family: Roboto, "Noto Sans CJK SC", sans-serif;
    color: #666;
    background: #edf2f7;
}

h2, h3, h4, p {
    margin: 0;
    font-weight: 400;
}

button {
    font-family: inherit;
    border: 0;
}

.sprite {
    position: absolute;
    width: 0;
    height: 0;
}

svg {
    fill: currentColor;
    display: block;
}

.chan-text {
    font: bold 8.500px "Liberation Serif", "Noto Sans CJK SC", serif;
    fill: #222;
}

.sock-text {
    font: bold 7px "Liberation Sans", sans-serif;
    text-anchor: middle;
    fill: #222;
}

.panel {
    position: relative;
    overflow: hidden;
    display: flex;
    flex-direction: column;
    background: #edf2f7;
}

/* top bars */
.bar {
    position: relative;
    flex: none;
    display: flex;
    align-items: center;
    justify-content: center;
    background: #2a9ce2;
    color: #fff;
    font-size: 41px;
    word-spacing: -6px;
}

.bar-126 { height: 126px; }
.bar-105 { height: 105px; padding-bottom: 25px; }
.bar-116 { height: 116px; padding-bottom: 10px; }
.bar-118 { height: 118px; padding-bottom: 10px; }

.bar-two {
    height: 115px;
    flex-direction: column;
}

.two-t {
    font-size: 40px;
    line-height: 50px;
    margin-top: -4px;
}

.two-s {
    font-size: 27px;
    line-height: 40px;
    margin-top: 10px;
}

.bar-back {
    position: absolute;
    left: 45px;
    top: 50%;
    margin-top: -27px;
    width: 24px;
    height: 44px;
}

.bar-126 .bar-back {
    margin-top: -22px;
}

.bar-back.up {
    top: 30px;
    margin-top: 0;
}

.bar-plus {
    position: absolute;
    right: 41px;
    top: 43px;
    width: 40px;
    height: 40px;
    fill: none;
    stroke: #fff;
    stroke-width: 6;
}

.bar-menu {
    position: absolute;
    left: 33px;
    top: 22px;
    width: 48px;
    height: 36px;
}

.bar-bell {
    position: absolute;
    right: 38px;
    top: 18px;
    width: 37px;
    height: 46px;
}

/* drawer */
.drawer {
    background: #e4f2fb;
    padding-top: 15px;
}

.logo {
    width: 270px;
    height: 265px;
    flex: none;
    margin-left: 140px;
}

.brand {
    font-family: "Liberation Serif", serif;
    font-style: italic;
    font-size: 62px;
    letter-spacing: 3.600px;
    line-height: 60px;
    color: #2d8fe0;
    margin: 20px 0 0 68px;
}

.nav {
    margin-top: 78px;
    display: flex;
    flex-direction: column;
}

.nav-i {
    height: 100.300px;
    display: flex;
    align-items: center;
    gap: 41px;
    padding-left: 61px;
    font-size: 32px;
    word-spacing: -5px;
    color: #7f8a99;
}

.nav-i svg {
    width: 48px;
    height: 48px;
    color: #6b7b93;
}

.nav-i.gap {
    margin-top: 34px;
}

.nav-i.active,
.nav-i.active svg {
    color: #39a0e2;
}

.phone {
    position: absolute;
    left: 555px;
    top: 247px;
    width: 480px;
    height: 1113px;
    display: flex;
    flex-direction: column;
    background: #eef2f6;
    box-shadow: 0 6px 14px rgba(0, 0, 0, 0.25);
}

.phone-bar {
    height: 83px;
    background: #2a9ce2;
    color: #fff;
    display: flex;
    align-items: center;
    padding-left: 23px;
    font-size: 26px;
    flex: none;
}

.phone-bar span {
    margin-left: 160px;
}

.phone-menu {
    width: 32px;
    height: 24px;
}

.phone-tabs {
    height: 62px;
    background: #fff;
    display: flex;
    flex: none;
    font-size: 20px;
    line-height: 59px;
    border-bottom: 3px solid #e8ecf0;
}

.phone-tabs b {
    font-weight: 400;
    width: 178px;
    height: 62px;
    text-align: center;
    color: #39a0e2;
    border-bottom: 3px solid #2a9ce2;
}

.phone-tabs span {
    margin-left: 65px;
    color: #444;
}

.phone-list {
    flex: 1;
    padding: 11px 0 0 7px;
}

.log {
    background: #fff;
    border-radius: 12px;
    padding: 8px 15px;
    margin-bottom: 8px;
}

.h183 { height: 183px; }
.h159 { height: 159px; }

.log-no {
    font-size: 23px;
    line-height: 28px;
    color: #888;
}

.log p {
    font-size: 16px;
    line-height: 24.500px;
    color: #8f8f8f;
    white-space: nowrap;
    border-bottom: 1px solid #eee;
    padding-bottom: 2px;
}

.log-foot {
    padding: 4px 0 0 12px;
}

.log-foot i {
    font-style: normal;
    font-size: 13px;
    line-height: 16px;
    color: #999;
    display: block;
    margin-left: -8px;
}

.mini {
    width: 29px;
    height: 30px;
    display: block;
    border-radius: 2px;
    color: #fff;
}

.mini svg {
    width: 29px;
    height: 30px;
}

.phone-nav {
    height: 82px;
    flex: none;
    background: #fff;
    display: flex;
    font-size: 17px;
    color: #a0a7b2;
}

.phone-nav div {
    width: 133px;
    display: flex;
    flex-direction: column;
    align-items: center;
    gap: 6px;
    padding-top: 10px;
}

.phone-nav .active {
    color: #39a0e2;
}

.phone-nav svg {
    width: 29px;
    height: 29px;
}

/* task cards */
.tasks {
    margin-top: 11px;
    padding: 0 10px 0 9px;
    display: flex;
    flex-direction: column;
    gap: 12px;
}

.task {
    height: 206px;
    background: #fff;
    border-radius: 26px;
    display: flex;
    justify-content: space-between;
    padding: 28px 23px 0 25px;
    box-shadow: 0 2px 4px rgba(0, 0, 0, 0.04);
}

.task-low {
    height: 200px;
}

.task-l {
    width: 560px;
}

.tiles {
    display: flex;
    align-items: center;
    gap: 9px;
    height: 50px;
}

.tile {
    width: 50px;
    height: 50px;
    border-radius: 13px;
    color: #fff;
    display: block;
    flex: none;
    padding: 3px;
}

.tile svg {
    width: 100%;
    height: 100%;
}

.t-blue { background: #3a82f7; }
.t-sky { background: #33aeff; }
.t-yel { background: #ffb020; }
.t-green { background: #36d468; }
.t-gray { background: #8f96b3; }
.t-org { background: #ff8519; }
.t-red { background: #ff5f2c; }
.t-pur { background: #8a86ff; }

.play {
    width: 0;
    height: 0;
    margin: 0 19px 0 15px;
    border-left: 27px solid #c8c8c8;
    border-top: 18px solid transparent;
    border-bottom: 18px solid transparent;
}

.task h3 {
    font-size: 33.800px;
    line-height: 44px;
    margin-top: 5px;
    color: #666;
    white-space: nowrap;
}

.task p {
    font-size: 20px;
    line-height: 27.500px;
    color: #888;
    white-space: nowrap;
}

.task-low p {
    margin-top: 21px;
}

.blur {
    display: inline-block;
    width: 96px;
    height: 22px;
    vertical-align: middle;
    background: linear-gradient(90deg, #f2f2f2, #fff);
}

.blur-dark {
    display: inline-block;
    width: 50px;
    height: 5px;
    vertical-align: middle;
    background: #555;
}

.blur-gray {
    display: inline-block;
    width: 34px;
    height: 18px;
    margin: 0 12px 0 22px;
    vertical-align: bottom;
    background: #ddd;
}

.task-r {
    display: flex;
    flex-direction: column;
    align-items: flex-end;
    margin-top: -2px;
}

.task-r time {
    font-size: 26px;
    line-height: 44px;
    color: #777;
    margin-top: 3px;
    white-space: nowrap;
}

.acts {
    display: flex;
    align-items: center;
    gap: 25px;
    margin: 13px 10px 0 0;
}

.task-low .acts {
    margin-top: 4px;
}

.a-copy { width: 36px; height: 40px; color: #1ec6b6; }
.a-edit { width: 36px; height: 37px; color: #2a8fdb; }
.a-del { width: 27px; height: 40px; color: #ef5a5a; }
.a-swap { color: #1ec6b6; }

.acts .a-del {
    margin-left: 3px;
}

/* switches */
.sw {
    width: 91px;
    height: 54px;
    flex: none;
    border-radius: 27px;
    background: #d6ebf9;
    display: flex;
    align-items: center;
    justify-content: flex-end;
    padding: 0 5px;
}

.sw::after {
    content: "";
    width: 46px;
    height: 46px;
    border-radius: 50%;
    background: #2a9ce2;
}

.sw.off {
    background: #dfdfdf;
    justify-content: flex-start;
}

.sw.off::after {
    background: #eeeeee;
}

/* dimmed task form */
.dim {
    background: #5f6062;
    color: #3c3c3c;
}

.dim-top {
    flex: none;
    height: 115px;
    margin: 0 21px;
    padding-left: 24px;
    display: flex;
    align-items: flex-start;
    background: #656565;
    border-radius: 0 0 26px 26px;
}

.dim-name {
    font-size: 31px;
    line-height: 92px;
    width: 214px;
}

.dim-input {
    width: 413px;
    height: 75px;
    border-bottom: 3px solid #505050;
}

.sw-dim {
    margin: 18px 0 0 11px;
    background: #5a6a76;
    padding: 0 3px;
}

.sw-dim::after {
    background: #0b4a73;
}

.dim-sec {
    display: flex;
    align-items: baseline;
    gap: 26px;
    height: 60px;
    margin: 48px 0 13px 23px;
    flex: none;
}

.dim-sec h2 {
    font-size: 42px;
    line-height: 60px;
}

.dim-sec span {
    font-size: 21px;
}

.dim-add {
    flex: none;
    height: 151px;
    margin: 0 21px;
    background: #656565;
    border-radius: 26px;
    display: flex;
    align-items: center;
    gap: 35px;
    padding-left: 34px;
}

.dim-plus {
    width: 60px;
    height: 60px;
    fill: #555;
}

.dim-add h3 {
    font-size: 34px;
    line-height: 44px;
}

.dim-add p {
    font-size: 21px;
    line-height: 30px;
    margin-top: 1px;
}

/* bottom sheets */
.sheet {
    position: absolute;
    left: 0;
    right: 0;
    bottom: 0;
    background: #fff;
    border-radius: 42px 42px 0 0;
    display: flex;
    flex-direction: column;
}

.sheet-940 { top: 940px; }
.sheet-540 { top: 540px; }

.sheet-title {
    height: 88px;
    flex: none;
    font-size: 31px;
    line-height: 88px;
    text-align: center;
    color: #666;
    border-bottom: 2px solid #eef0f2;
}

.sheet-title.short {
    height: 92px;
    line-height: 86px;
}

.pick4 {
    display: grid;
    grid-template-columns: repeat(4, 1fr);
    flex: none;
}

.cell {
    height: 200px;
    padding-top: 38px;
    border-right: 2px solid #eef0f2;
    border-bottom: 3px solid #eef0f2;
    display: flex;
    flex-direction: column;
    align-items: center;
}

.cell label {
    font-size: 26px;
    line-height: 36px;
    margin-top: 24px;
    color: #a8b2c0;
    white-space: nowrap;
}

.tile.big {
    width: 88px;
    height: 88px;
    border-radius: 26px;
    padding: 8px;
}

.small .cell {
    height: 199px;
    padding-top: 44px;
}

.small .cell label {
    margin-top: 31px;
}

.sq {
    width: 73px;
    height: 73px;
    display: flex;
    align-items: center;
    justify-content: center;
    border-radius: 6px;
    color: #fff;
    box-shadow: 0 2px 3px rgba(0, 0, 0, 0.2);
    flex: none;
}

.sq svg {
    width: 72px;
    height: 72px;
}

.t-ding { background: linear-gradient(180deg, #1d9bf5, #2a8cf5); }
.t-mail { background: linear-gradient(180deg, #1e7ef0, #1cbcf8); }
.t-bark { background: #fa3e33; }
.t-hook { background: #22c7ad; }
.t-wework { background: #0a84ea; }
.t-sms { background: #38a8fd; }
.t-white { background: #fff; }

.t-push {
    background: linear-gradient(180deg, #0a7be8, #0643c8);
    font-size: 13px;
    font-weight: 700;
}

.sheet-close {
    flex: 1;
    display: flex;
    align-items: center;
    justify-content: center;
    font-size: 31px;
    color: #333;
    word-spacing: 8px;
    padding-bottom: 6px;
}

.dim-tabs {
    height: 50px;
    flex: none;
    display: flex;
    margin-bottom: 16px;
    background: #595a5c;
    line-height: 0;
    font-size: 31px;
}

.dim-tabs span {
    width: 411px;
    text-align: center;
    padding-top: 2px;
    color: #2b2b2b;
}

.dim-tabs .cur {
    color: #1f6d9b;
    border-bottom: 4px solid #22628a;
}

.chan {
    flex: none;
    height: 127px;
    margin: 0 10px 12px;
    background: #656565;
    border-radius: 26px;
    display: flex;
    align-items: center;
    font-size: 31px;
    color: #3c3c3c;
    padding-left: 32px;
}

.chan .acts {
    margin: 0 38px 0 auto;
    filter: brightness(0.7);
}

.thumb-ic {
    position: relative;
    width: 67px;
    height: 67px;
    margin-right: 32px;
    border-radius: 4px;
    filter: brightness(0.62);
    color: #fff;
    flex: none;
}

.thumb-ic svg {
    width: 67px;
    height: 67px;
}

.thumb-ic i,
.mini-ch i {
    position: absolute;
    right: -8px;
    bottom: -4px;
    width: 24px;
    height: 18px;
    border-radius: 50%;
    background: #21d4b4;
}

/* generic cards */
.card {
    flex: none;
    background: #fff;
    border-radius: 26px;
    margin: 0 20px 12px 21px;
}

.opt {
    display: flex;
    align-items: center;
    justify-content: space-between;
    padding: 23px 23px 22px 25px;
}

.h205 {
    height: 205px;
    padding: 24px 23px 16px 25px;
}

.h205 .sw {
    margin-top: -8px;
}

.h172 {
    height: 172px;
    padding: 23px 23px 22px 25px;
}

.opt h3,
.match h3,
.flip h3,
.silent h3 {
    font-size: 31px;
    line-height: 40px;
    white-space: nowrap;
}

.opt p,
.silent p {
    font-size: 20.300px;
    line-height: 28px;
    margin-top: 3px;
    color: #888;
    white-space: nowrap;
}

.far {
    padding-right: 35px;
}

.sec {
    display: flex;
    align-items: center;
    height: 40px;
    margin: 12px 0 13px 23px;
    flex: none;
    gap: 25px;
}

.sec-first {
    margin-top: 24px;
}

.sec h2 {
    font-size: 31px;
    color: #666;
    white-space: nowrap;
}

.sec span {
    font-size: 21px;
    color: #888;
    white-space: nowrap;
}

.calls {
    display: flex;
    align-items: center;
    margin-top: 1px;
}

.calls b,
.line b {
    font-weight: 400;
    font-size: 26px;
    color: #666;
    width: 135px;
    flex: none;
}

.checks {
    display: grid;
    grid-template-columns: 155px 155px 155px;
}

.line {
    display: flex;
    align-items: center;
    height: 44px;
    margin: 5px 0 7px;
}

.chk {
    position: relative;
    display: inline-flex;
    align-items: center;
    gap: 3px;
    font-size: 26px;
    line-height: 45px;
    color: #666;
    white-space: nowrap;
}

.line .chk {
    margin-right: 13px;
}

.chk::before {
    content: "";
    width: 34px;
    height: 34px;
    flex: none;
    border-radius: 50%;
    border: 2px solid #ddd;
}

.chk.on::before {
    border: 0;
    background: #2a9ce2;
}

.chk.on::after {
    content: "";
    position: absolute;
    left: 9px;
    top: 50%;
    width: 16px;
    height: 8px;
    margin-top: -7px;
    border-left: 3px solid #fff;
    border-bottom: 3px solid #fff;
    transform: rotate(-45deg);
}

.radio {
    display: inline-flex;
    align-items: center;
    gap: 5px;
    font-size: 27px;
    color: #333;
    white-space: nowrap;
}

.radio::before {
    content: "";
    width: 34px;
    height: 34px;
    flex: none;
    border-radius: 50%;
    border: 3px solid #999;
}

.radio.on::before {
    border-color: #2a9ce2;
    background: #2a9ce2;
    box-shadow: inset 0 0 0 4px #fff;
}

/* gps */
.gps {
    padding-bottom: 22px;
}

.opt-rule {
    padding-bottom: 11px;
    margin-right: 8px;
    padding-right: 15px;
    border-bottom: 2px solid #eee;
}

.opt-rule p {
    margin-top: 1px;
}

.gps-row {
    height: 70px;
    display: flex;
    align-items: center;
    padding-left: 25px;
    gap: 12px;
}

.gps-row b,
.loc b,
.sl span {
    font-weight: 400;
    font-size: 26px;
    color: #777;
    white-space: nowrap;
}

.gps-row b {
    width: 108px;
    margin-right: 6px;
}

.loc {
    display: flex;
    align-items: center;
    padding-left: 25px;
    margin-top: -2px;
}

.loc b {
    width: 121px;
}

.sl {
    height: 96px;
    display: flex;
    align-items: center;
}

.sl span {
    width: 191px;
}

.sl i {
    font-style: normal;
    font-size: 26px;
    color: #666;
    margin-left: 28px;
}

.track {
    position: relative;
    width: 372px;
    height: 6px;
    border-radius: 3px;
    background: #eee;
}

.fill {
    height: 100%;
    border-radius: 3px;
    background: #2a9ce2;
}

.thumb {
    position: absolute;
    top: 50%;
    width: 36px;
    height: 36px;
    margin: -18px 0 0 -18px;
    border-radius: 50%;
    background: #fff;
    box-shadow: 0 1px 4px rgba(0, 0, 0, 0.08);
    display: flex;
    align-items: center;
    justify-content: center;
}

.thumb::after {
    content: "";
    width: 12px;
    height: 8px;
    border-radius: 50%;
    background: #2a9ce2;
}

.thumb em {
    position: absolute;
    top: -32px;
    left: 0;
    width: 36px;
    text-align: center;
    font-style: normal;
    font-size: 26px;
    line-height: 26px;
    color: #2a9ce2;
}

/* rule edit */
.wide {
    margin: 0 20px 12px 21px;
    padding: 0 23px 0 25px;
}

.c7-first {
    margin-top: 23px;
    height: 355px;
}

.sel-row {
    display: flex;
    align-items: center;
    height: 103px;
    padding-top: 19px;
    padding-bottom: 7px;
    border-bottom: 2px solid #eee;
}

.sel-row b,
.logic b {
    font-weight: 400;
    font-size: 31px;
    color: #777;
    width: 139px;
    flex: none;
}

.sel {
    flex: 1;
    height: 68px;
    border: 2px solid #bbb;
    border-radius: 8px;
    display: flex;
    align-items: center;
    justify-content: space-between;
    padding: 0 19px 0 22px;
    font-size: 29px;
    color: #555;
}

.sel i {
    width: 0;
    height: 0;
    border-left: 11px solid transparent;
    border-right: 11px solid transparent;
    border-top: 8px solid #222;
}

.ch-row {
    height: 80px;
    display: flex;
    align-items: center;
    border-bottom: 2px solid #eee;
    padding-left: 16px;
    font-size: 27px;
    color: #777;
}

.mini-ch {
    position: relative;
    width: 44px;
    height: 45px;
    margin-right: 29px;
    color: #fff;
    flex: none;
    border-radius: 3px;
}

.mini-ch svg {
    width: 44px;
    height: 45px;
}

.ch-row .a-del {
    width: 27px;
    height: 37px;
    margin-left: auto;
}

.ch-row .a-swap {
    width: 26px;
    height: 36px;
    margin: 0 10px 0 31px;
}

.logic {
    display: flex;
    align-items: center;
    height: 70px;
}

.logic .radio {
    font-size: 26px;
}

.r197 {
    width: 197px;
}

.match {
    height: 157px;
    padding-top: 24px;
}

.match h3 {
    line-height: 40px;
    margin-bottom: 14px;
}

.rads {
    display: flex;
    align-items: center;
    height: 40px;
}

.rads .radio {
    font-size: 26px;
}

.r243 {
    width: 243px;
}

.g16 {
    gap: 16px;
}

.flip {
    height: 100px;
    display: flex;
    align-items: center;
    justify-content: space-between;
}

.silent {
    height: 116px;
    display: flex;
    align-items: center;
}

.silent-t {
    width: 434px;
}

.silent p {
    margin-top: 0;
    line-height: 26px;
}

.clock-range {
    font-size: 31px;
    color: #777;
    white-space: nowrap;
    margin-right: 23px;
}

.btn {
    width: 106px;
    height: 50px;
    flex: none;
    background: #2a9ce2;
    color: #fff;
    font-size: 21px;
    border-radius: 3px;
    margin-left: auto;
}

.silent .btn {
    width: 64px;
}

/* server and client */
.s-server {
    margin-top: 35px;
    margin-bottom: 14px;
}

.s-enable {
    margin-top: 11px;
    margin-bottom: 14px;
}

.s-client {
    margin-top: 25px;
    margin-bottom: 13px;
}

.s-func {
    margin-top: 47px;
    margin-bottom: 13px;
}

.http {
    height: 130px;
    display: flex;
    align-items: center;
    padding: 0 21px 0 24px;
}

.http-t {
    display: flex;
    align-items: center;
    height: 44px;
    margin-bottom: 1px;
}

.http-t h4 {
    font-size: 33px;
    font-weight: 400;
    width: 189px;
    color: #666;
}

.http-s {
    display: flex;
    align-items: center;
    gap: 12px;
    font-size: 20.500px;
    color: #888;
    white-space: nowrap;
}

.tag {
    width: 55px;
    height: 41px;
    background: #1fd1b8;
    color: #fff;
    border-radius: 3px;
    font-size: 21px;
    line-height: 41px;
    text-align: center;
}

.safe {
    height: 156px;
    padding: 22px 25px 0 26px;
}

.safe-t {
    display: flex;
    align-items: center;
    height: 42px;
    gap: 26px;
}

.safe-t h3 {
    font-size: 31px;
    white-space: nowrap;
}

.safe-t span {
    font-size: 20.500px;
    color: #888;
    white-space: nowrap;
}

.safe-r {
    display: grid;
    grid-template-columns: 183px 183px 182px 1fr;
    height: 42px;
    margin-top: 14px;
    align-items: center;
}

.keyr {
    height: 126px;
    display: flex;
    align-items: center;
    padding: 0 21px 0 24px;
}

.keyr h3 {
    font-size: 31px;
    white-space: nowrap;
    width: 143px;
    flex: none;
}

.key-in {
    width: 470px;
    height: 47px;
    margin: 0 11px 0 0;
    padding-left: 6px;
    border-bottom: 2px solid #bbb;
    font-family: "Liberation Sans", sans-serif;
    font-size: 15px;
    line-height: 26px;
    letter-spacing: 15.300px;
    color: #222;
    white-space: nowrap;
    overflow: hidden;
}

.web {
    height: 121px;
}

.web h3 {
    width: 185px;
}

.web-in {
    width: 419px;
    height: 42px;
    margin-right: 20px;
    padding-left: 14px;
    border-bottom: 2px solid #bbb;
    font-size: 20.500px;
    line-height: 36px;
    color: #c4c8ce;
    white-space: nowrap;
    overflow: hidden;
}

.addr {
    height: 132px;
    display: flex;
    align-items: center;
    padding: 0 31px 0 25px;
}

.addr h3 {
    font-size: 31px;
    width: 147px;
    flex: none;
}

.addr-in {
    flex: 1;
    height: 52px;
    padding-left: 15px;
    border-bottom: 2px solid #bbb;
    font-size: 31px;
    line-height: 46px;
    color: #333;
}

.key-big {
    height: 136px;
    margin-bottom: 24px;
}

.key-big .key-in {
    width: 587px;
    height: 58px;
    margin: 0;
    padding-left: 7px;
    font-size: 22px;
    line-height: 38px;
    letter-spacing: 21.900px;
}

.btns {
    display: flex;
    flex: none;
    height: 62px;
    padding-left: 128px;
    gap: 35px;
}

.pill {
    width: 160px;
    height: 62px;
    border-radius: 10px;
    color: #fff;
    font-size: 29px;
}

.p-gray { background: #9aa6b2; }
.p-blue { background: #4a97d4; }
.p-teal { background: #2dcfb3; width: 171px; }

.funcs {
    flex: none;
    display: grid;
    grid-template-columns: repeat(3, 1fr);
    margin: 0 12px 0 9px;
}

.fn {
    height: 199px;
    padding-top: 35px;
    background: #fff;
    border-right: 2px solid #eee;
    border-bottom: 2px solid #eee;
    display: flex;
    flex-direction: column;
    align-items: center;
    color: #2a8fdb;
}

.fn svg {
    width: 92px;
    height: 92px;
}

.fn label {
    font-size: 27px;
    line-height: 34px;
    margin-top: 19px;
    color: #a8b2c0;
}

/* about */
.logo-sm {
    width: 219px;
    height: 215px;
    margin: 20px 0 0 301px;
}

.brand-sm {
    font-size: 50px;
    letter-spacing: 2.900px;
    line-height: 50px;
    margin: 17px 0 0 243px;
}

.slogan {
    font-size: 31px;
    line-height: 44px;
    text-align: center;
    color: #a0a0a0;
    margin-top: 16px;
    padding-right: 10px;
}

.block {
    flex: none;
    background: #fff;
}

.block-a {
    margin: 33px 0 23px;
}

.ab {
    height: 114px;
    margin: 0 25px;
    padding: 0 23px 0 24px;
    border-bottom: 2px solid #eef0f2;
    display: flex;
    align-items: center;
    font-size: 31px;
    color: #2c3e50;
    white-space: nowrap;
}

.ab > span:first-child {
    margin-right: auto;
}

.ab em {
    font-style: normal;
    margin-left: 20px;
}

.chk.small {
    font-size: 20px;
    margin-right: 13px;
    color: #888;
}

.ab-btn {
    height: 59px;
    padding: 0 12px;
    border-radius: 12px;
    background: #4a9fdc;
    color: #fff;
    font-size: 27px;
}

.ab-btn.next {
    margin-left: 22px;
}

.more {
    width: 16px;
    height: 16px;
    margin-right: 3px;
    border-top: 2px solid #888;
    border-right: 2px solid #888;
    transform: rotate(45deg) skew(10deg, 10deg);
}
```
